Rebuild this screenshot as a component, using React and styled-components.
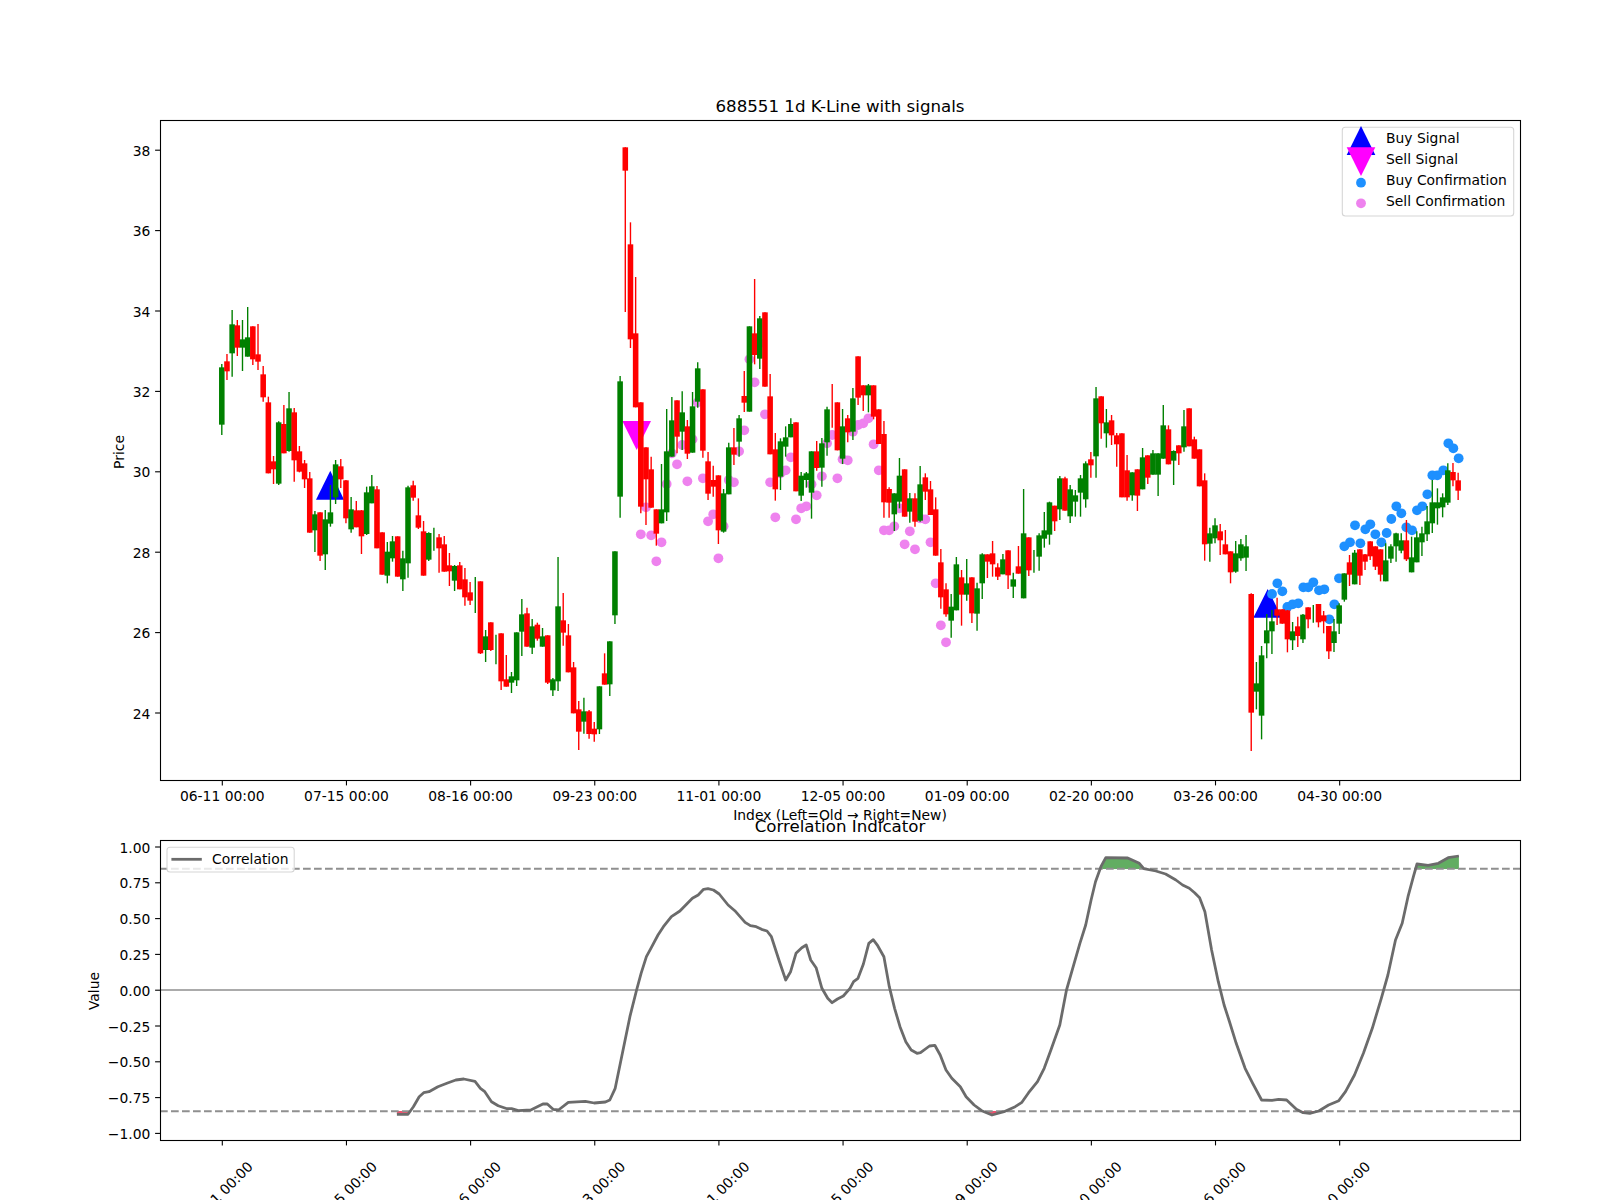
import React from 'react';
import styled, { createGlobalStyle } from 'styled-components';

const Global = createGlobalStyle`
  html, body { margin: 0; padding: 0; background: #fff; }
  #root { width: 1600px; height: 1200px; overflow: hidden; }
`;

const Figure = styled.main`
  width: 1600px;
  height: 1200px;
  display: flex;
  flex-direction: column;
  background: #fff;
  overflow: hidden;
  font-family: "DejaVu Sans", sans-serif;
`;
const PriceChart = styled.svg`
  display: block;
  flex: 0 0 808px;
  width: 1600px;
  height: 808px;
  overflow: visible;
`;
const CorrelationChart = styled.svg`
  display: block;
  flex: 0 0 392px;
  width: 1600px;
  height: 392px;
`;
const Frame = styled.rect`
  fill: none;
  stroke: #000;
  stroke-width: 1.1;
`;
const Tick = styled.line`
  stroke: #000;
  stroke-width: 1.1;
`;
const Label = styled.text`
  font-family: "DejaVu Sans", sans-serif;
  font-size: 13.89px;
  fill: #000;
  text-anchor: ${p => p.$anchor || 'middle'};
`;
const Title = styled.text`
  font-family: "DejaVu Sans", sans-serif;
  font-size: 16.67px;
  fill: #000;
  text-anchor: middle;
`;
const Wick = styled.line`
  stroke: ${p => (p.$up ? '#008000' : '#ff0000')};
  stroke-width: 1.39;
`;
const Body = styled.rect`
  fill: ${p => (p.$up ? '#008000' : '#ff0000')};
`;
const Marker = styled.polygon`
  fill: ${p => p.$color};
`;
const Dot = styled.circle`
  fill: ${p => p.$color};
`;
const LegendBox = styled.rect`
  fill: #fff;
  fill-opacity: 0.8;
  stroke: #d6d6d6;
  stroke-width: 1.1;
`;
const Guide = styled.line`
  stroke: ${p => (p.$solid ? '#ababab' : '#8f8f8f')};
  stroke-width: 2.08;
  stroke-dasharray: ${p => (p.$solid ? 'none' : '7.7 3.3')};
`;
const Band = styled.polygon`
  fill: ${p => p.$color};
`;
const Trace = styled.polyline`
  fill: none;
  stroke: #6b6b6b;
  stroke-width: 2.78;
  stroke-linejoin: round;
`;
const LegendSwatch = styled.line`
  stroke: #6b6b6b;
  stroke-width: 2.78;
`;

const G = 1, R = 0;
// [up, wickTop, bodyTop, bodyBottom, wickBottom] traced from the reference, grouped by origin
const segments = [
  [260, [
    [G,312,322,494,525],[R,282,304,334,360],[G,150,193,280,350],[R,180,196,263,288],[G,180,238,263,333],
    [G,141,232,290,290],[R,199,199,298,315],[R,192,283,305,330],[R,318,343,412,425],[R,410,427,640,640],
    [R,588,604,628,672],[G,484,487,671,675],[R,435,492,580,580],[G,396,445,573,575],[R,444,457,601,665],
    [R,558,574,635,637],[R,600,610,658,684],[R,636,655,818,818],[G,753,763,811,876],[R,757,757,887,903],
    [G,750,778,883,930],[G,675,757,791,800],[G,600,613,712,732],[R,597,619,658,684],[R,660,661,775,790],
    [G,711,748,808,818],[R,723,751,802,802],[R,750,751,829,882],[G,680,697,822,825],[G,645,679,730,730],
    [R,678,688,865,865],[R,817,817,944,944],[G,846,875,947,970],[G,828,844,895,905],[R,829,829,950,950],
  ]],
  [430, [
    [G,362,385,448,483],[G,167,172,400,443],[R,152,166,203,212],[R,205,256,293,297],[R,273,304,437,437],
    [G,307,309,389,393],[G,293,null,null,362],[R,312,322,355,428],[R,318,343,425,425],[R,369,406,424,468],
    [G,405,408,452,483],[R,396,406,478,478],[R,414,448,502,527],[R,456,487,512,525],[G,441,null,null,549],
    [R,454,454,670,672],[G,600,619,660,696],[R,577,577,660,663],[G,614,null,null,703],[R,610,610,754,780],
    [R,675,748,770,770],[G,726,739,758,789],[G,607,607,751,768],[G,507,553,605,678],[R,533,550,650,650],
    [G,567,589,653,672],[R,578,584,626,632],[G,594,619,650,650],[R,616,616,758,762],[G,744,748,781,798],
    [G,381,529,754,783],[R,489,571,608,647],[R,582,616,727,727],[R,696,712,850,850],[R,813,838,905,960],
    [G,803,844,875,911],[R,840,844,912,926],[R,876,896,913,935],[G,769,769,898,912],[R,670,730,764,764],
    [G,634,634,763,798],[G,364,364,556,582],
  ]],
  [400, [
    [G,-72,-56,290,353],[R,-758,-758,-688,-264],[R,-533,-467,-182,-156],[R,-369,-200,22,22],[R,7,7,320,340],
    [R,142,142,238,375],[R,170,208,323,323],[R,328,328,401,437],[G,192,328,370,370],[G,27,154,337,363],
    [G,-9,61,170,170],[R,1,1,110,160],[G,-26,37,95,150],[R,60,79,161,177],[G,-24,19,158,158],
    [G,-113,-95,5,23],[R,-32,-32,152,173],[R,156,184,281,300],[R,197,240,260,290],[R,226,226,391,432],
    [G,267,280,395,398],[G,128,142,283,283],[R,84,142,164,195],[G,45,55,125,170],[R,-87,-12,8,36],
    [G,-221,-221,35,35],[R,-363,-200,-135,-107],[G,-252,-245,-124,-93],[R,-263,-263,-40,-40],[R,-78,-11,163,163],
    [R,99,148,268,302],[G,115,124,230,270],[G,79,112,140,170],[G,55,72,112,112],[R,67,67,274,274],
    [G,216,227,287,303],[G,216,220,240,263],[G,154,154,278,356],[R,123,154,204,212],[G,114,130,203,260],
    [G,20,28,127,167],[R,-48,null,null,83],[R,7,7,151,151],[G,27,79,176,192],[R,45,55,97,127],
    [G,-36,-5,95,120],[R,-131,-131,-7,15],[R,-44,-44,-14,33],[G,-48,-44,-14,37],[R,-44,-44,50,58],
    [R,28,28,132,132],[R,63,102,307,353],[R,262,267,308,353],[G,280,280,343,393],[G,174,227,305,325],
    [R,208,208,350,350],
  ]],
  [340, [
    [G,459,475,515,548],[R,460,475,545,560],[G,378,433,542,545],[R,400,412,455,480],[R,423,448,525,525],
    [R,472,508,647,647],[R,627,667,772,806],[R,730,748,823,830],[G,762,800,842,893],[G,651,673,811,811],
    [R,690,712,764,857],[G,657,730,764,782],[R,712,712,820,849],[G,728,745,821,872],[G,640,643,730,777],
    [R,643,643,665,714],[R,603,640,673,710],[R,670,682,710,720],[G,642,658,703,703],[R,631,631,706,747],
    [G,698,718,740,774],[R,618,679,701,701],[G,447,580,775,775],[R,592,592,691,708],[G,630,null,null,698],
    [G,580,586,650,692],[G,516,571,596,623],[G,485,487,584,614],[R,497,497,544,573],[G,408,415,508,540],
    [R,410,415,512,512],[G,435,448,529,549],[G,450,466,485,530],[G,405,415,458,530],[G,364,370,478,503],
    [R,336,358,376,413],[G,141,175,349,413],[R,169,169,250,296],[G,207,247,280,323],[R,225,241,286,315],
    [R,279,286,313,380],[R,280,280,472,472],[R,345,391,472,482],[G,397,397,466,482],[R,388,388,467,513],
    [G,324,352,448,448],[R,346,346,413,432],[G,330,340,404,404],[G,340,340,404,468],[G,195,256,356,356],
    [R,256,268,373,373],[G,331,333,362,435],[R,316,316,340,375],[G,210,259,322,335],[R,205,205,319,319],
    [R,290,298,356,356],[R,328,328,439,439],
  ]],
  [420, [
    [R,160,181,373,422],[G,323,340,371,425],[G,295,316,355,370],[R,312,334,361,405],[R,330,373,403,403],
    [R,394,394,457,490],[G,363,400,455,458],[G,357,373,415,422],[G,345,379,413,453],[R,520,522,878,993],
    [G,726,790,815,868],[G,678,706,887,958],[G,582,631,670,715],[G,570,604,634,702],[R,533,568,587,615],
    [R,568,568,611,611],[R,570,571,658,697],[G,606,634,661,690],[R,590,619,648,681],[G,582,584,658,669],
    [R,562,562,598,625],[G,555,null,null,608],[R,552,552,607,622],[R,573,586,604,640],[R,618,618,694,717],
    [G,597,634,669,696],[G,550,556,611,642],[G,460,460,539,545],[R,405,427,464,498],[G,390,398,493,493],
    [R,388,388,467,495],[R,402,403,425,450],[R,364,364,409,420],[R,379,379,440,450],[R,388,388,464,484],
    [G,370,421,484,484],[G,373,379,416,429],[G,338,340,379,425],[G,340,361,392,400],[R,300,361,418,423],
    [G,350,412,457,457],[G,334,352,427,427],[G,320,340,367,408],[G,258,304,343,363],[G,180,247,310,339],
    [G,205,247,265,314],[G,220,232,262,292],[G,130,151,248,255],[R,129,156,181,199],[R,158,181,212,240],
  ]],
];

const X0 = 221.8, DX = 5.173;
const xAt = i => X0 + DX * i;
const candles = segments.flatMap(([origin, rows]) =>
  rows.map(([up, a, b, c, d]) => ({
    up: up === G,
    wt: origin + a / 3,
    bt: b == null ? null : origin + b / 3,
    bb: c == null ? null : origin + c / 3,
    wb: origin + d / 3,
  }))
);

const buyDots = [[216,522],[232,490],[247,514],[262,561],[278,553],[295,550],[310,502],[325,502],[340,487],[357,511],[373,508],[388,598],[403,553],[417,475],[433,379],[450,367],[465,316],[481,370],[496,328],[511,313],[526,343],[544,367],[560,339],[574,297],[589,259],[604,280],[619,322],[636,331],[651,271],[667,259],[682,223],[697,166],[712,166],[730,151],[745,70],[760,85],[776,115]]
  .map(([x, y]) => [1200 + x / 3, 420 + y / 3]);

const sellYs = [403,322,406,484,427,252,160,193,135,244,118,7,235,364,343,475,379,240,247,154,91,-122,-53,-170,43,247,352,220,211,172,358,325,319,253,286,229,130,105,235,178,181,95,75,70,55,133,211,391,391,379,325,433,394,448,355,358,427,550,676,727];
const sellDots = sellYs.map((z, k) => [xAt(81 + k), 400 + z / 3]);

const z8 = [[553,1003],[578,1003],[590,980],[603,950],[613,938],[625,935],[645,920],[665,910],[685,900],[703,897],[728,904],[740,925],[750,935],[765,965],[780,977],[800,986],[810,986],[825,992],[853,990],[880,972],[890,972],[903,988],[915,990],[937,967],[975,964],[995,969],[1020,966],[1030,960],[1042,925],[1055,840],[1075,710],[1090,630],[1100,580],[1112,530],[1122,505],[1138,465],[1150,440],[1168,410],[1187,393],[1215,355],[1228,345],[1240,328],[1250,326],[1262,330],[1275,342],[1295,375],[1310,392],[1333,427],[1345,437],[1358,440],[1370,448],[1382,453],[1392,470],[1410,545],[1424,600],[1435,575],[1447,520],[1460,503],[1470,495],[1480,540],[1492,563],[1505,625],[1518,655],[1528,668],[1540,657],[1553,648]];
const z9 = [[0,625],[8,605],[18,595],[30,552],[42,490],[52,479],[62,497],[76,530],[88,620],[100,685],[112,740],[125,785],[137,810],[150,820],[158,818],[178,798],[190,796],[202,825],[215,870],[228,895],[247,920],[260,950],[278,975],[295,992],[318,1005],[345,995],[370,980],[385,967],[400,938],[420,905],[435,865],[450,810],[470,735],[485,630],[500,560],[515,490],[528,435],[540,360],[550,305],[562,260],[573,233],[622,234],[648,250],[658,266],[685,273],[707,282],[730,300],[745,315],[760,325],[772,338],[783,353],[795,395],[810,510],[825,605],[838,675],[850,725],[865,790],[885,865],[902,910],[922,960],[945,961],[960,958],[978,960],[1000,988],[1015,998],[1030,1000],[1050,993],[1072,975],[1095,962],[1110,935],[1130,885],[1150,820],[1170,745],[1190,655],[1205,585],[1222,480],[1237,430],[1250,350],[1262,290],[1270,252],[1295,256],[1318,250],[1340,233],[1364,228]];
const from8 = ([x, y]) => `${(150 + x / 2.24).toFixed(1)},${(780 + y / 3).toFixed(1)}`;
const from9 = ([x, y]) => `${(850 + x / 2.24).toFixed(1)},${(780 + y / 3).toFixed(1)}`;
const tracePts = [...z8.map(from8), ...z9.map(from9)].join(' ');

const greenBands = [
  [[562,267],[562,260],[573,233],[622,234],[648,250],[658,267]],
  [[1268,267],[1270,252],[1295,256],[1318,250],[1340,233],[1364,228],[1364,267]],
].map(b => b.map(from9).join(' '));
const redBands = [
  [[295,993],[318,1005],[345,993]].map(from9),
  [[1005,993],[1030,1000],[1050,993]].map(from9),
  [[553,993],[578,993],[578,1003],[553,1003]].map(from8),
].map(b => b.join(' '));

const dateTicks = ['06-11 00:00','07-15 00:00','08-16 00:00','09-23 00:00','11-01 00:00','12-05 00:00','01-09 00:00','02-20 00:00','03-26 00:00','04-30 00:00'];
const tickX = k => xAt(k * 24) + 0.5;
const priceTicks = [38,36,34,32,30,28,26,24];
const priceY = p => 150.2 + (38 - p) * 40.2;
const valTicks = ['1.00','0.75','0.50','0.25','0.00','−0.25','−0.50','−0.75','−1.00'];
const valY = k => 847 + k * 35.8;

const Candle = ({ c, i }) => {
  const x = xAt(i);
  return (
    <g>
      <Wick $up={c.up} x1={x} x2={x} y1={c.wt} y2={c.wb} />
      {c.bt != null && <Body $up={c.up} x={x - 2.78} width={5.56} y={c.bt} height={c.bb - c.bt} />}
    </g>
  );
};

export default function App() {
  return (
    <Figure>
      <Global />
      <PriceChart viewBox="0 0 1600 808">
        <Title x={840} y={111.7}>688551 1d K-Line with signals</Title>
        <Marker $color="#0000ff" points="316,499.7 330.3,470.7 344,499.7" />
        <Marker $color="#0000ff" points="1253.3,617.7 1267.7,589 1282,617.7" />
        <Marker $color="#ff00ff" points="622.3,421 651,421 636.7,450" />
        {sellDots.map(([x, y], k) => <Dot key={k} $color="#ee82ee" cx={x} cy={y} r={4.9} />)}
        {buyDots.map(([x, y], k) => <Dot key={k} $color="#1e90ff" cx={x} cy={y} r={4.9} />)}
        {candles.map((c, i) => <Candle key={i} c={c} i={i} />)}
        <Frame x={160.5} y={120.5} width={1360} height={660} />
        {priceTicks.map(p => (
          <g key={p}>
            <Tick x1={155.1} x2={160} y1={priceY(p)} y2={priceY(p)} />
            <Label $anchor="end" x={150.3} y={priceY(p) + 5.5}>{p}</Label>
          </g>
        ))}
        {dateTicks.map((d, k) => (
          <g key={d}>
            <Tick x1={tickX(k)} x2={tickX(k)} y1={781} y2={785.4} />
            <Label x={tickX(k)} y={801}>{d}</Label>
          </g>
        ))}
        <Label x={840} y={820}>Index (Left=Old → Right=New)</Label>
        <Label transform="translate(124 452) rotate(-90)" x={0} y={0}>Price</Label>
        <LegendBox x={1342.3} y={127.3} width={171.4} height={88.7} rx={3} />
        <Marker $color="#0000ff" points="1346.7,155 1361,126 1375.3,155" />
        <Marker $color="#ff00ff" points="1346.7,147.3 1375.3,147.3 1361,176" />
        <Dot $color="#1e90ff" cx={1361} cy={182.7} r={4.9} />
        <Dot $color="#ee82ee" cx={1361} cy={203.3} r={4.9} />
        <Label $anchor="start" x={1386} y={143}>Buy Signal</Label>
        <Label $anchor="start" x={1386} y={164}>Sell Signal</Label>
        <Label $anchor="start" x={1386} y={185}>Buy Confirmation</Label>
        <Label $anchor="start" x={1386} y={206}>Sell Confirmation</Label>
      </PriceChart>
      <CorrelationChart viewBox="0 808 1600 392">
        <Title x={840} y={831.7}>Correlation Indicator</Title>
        {greenBands.map((pts, k) => <Band key={k} $color="#62ad62" points={pts} />)}
        {redBands.map((pts, k) => <Band key={k} $color="#f0506e" points={pts} />)}
        <Guide $solid x1={160} x2={1520} y1={990} y2={990} />
        <Guide x1={160} x2={1520} y1={868.7} y2={868.7} />
        <Guide x1={160} x2={1520} y1={1111.3} y2={1111.3} />
        <Trace points={tracePts} />
        <Frame x={160.5} y={840.5} width={1360} height={300} />
        {valTicks.map((v, k) => (
          <g key={v}>
            <Tick x1={155.1} x2={160} y1={valY(k)} y2={valY(k)} />
            <Label $anchor="end" x={150.3} y={valY(k) + 5.5}>{v}</Label>
          </g>
        ))}
        {dateTicks.map((d, k) => (
          <g key={d}>
            <Tick x1={tickX(k)} x2={tickX(k)} y1={1141} y2={1145.4} />
            <Label transform={`translate(${tickX(k) - 2} 1194) rotate(-45)`} x={0} y={5}>{d}</Label>
          </g>
        ))}
        <Label transform="translate(99 991) rotate(-90)" x={0} y={0}>Value</Label>
        <LegendBox x={167} y={847.3} width={127.2} height={24.7} rx={3} />
        <LegendSwatch x1={171.4} x2={201.8} y1={859.3} y2={859.3} />
        <Label $anchor="start" x={212} y={864.3}>Correlation</Label>
      </CorrelationChart>
    </Figure>
  );
}
